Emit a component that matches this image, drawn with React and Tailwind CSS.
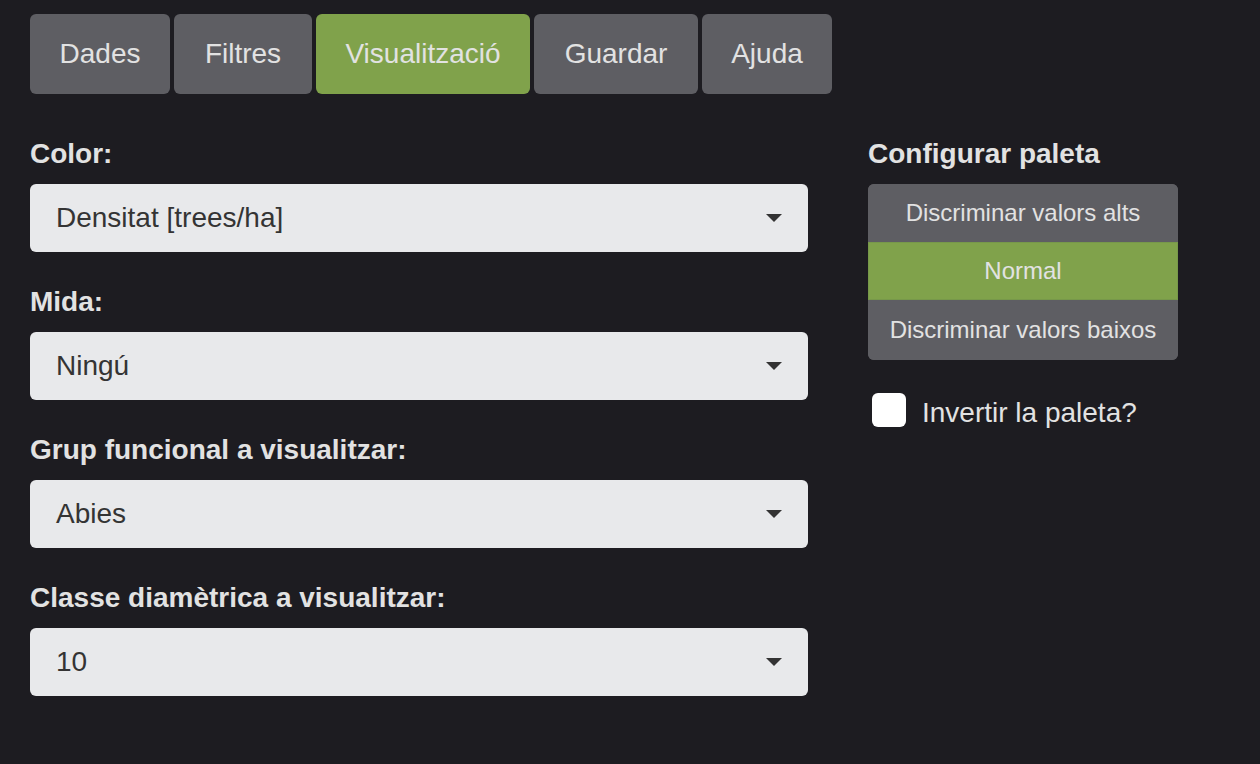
import { useState } from 'react';

const tabs = [
  ['Dades', 'w-[140px]'],
  ['Filtres', 'w-[138px]'],
  ['Visualització', 'w-[214px]'],
  ['Guardar', 'w-[164px]'],
  ['Ajuda', 'w-[130px]'],
];

const fields = [
  ['Color:', 'Densitat [trees/ha]'],
  ['Mida:', 'Ningú'],
  ['Grup funcional a visualitzar:', 'Abies'],
  ['Classe diamètrica a visualitzar:', '10'],
];

const palette = ['Discriminar valors alts', 'Normal', 'Discriminar valors baixos'];

function Select({ value }) {
  return (
    <div className="h-[68px] w-full rounded-[6px] bg-[#e8e9eb] pl-[26px] pr-[26px] flex items-center justify-between text-[28px] text-[#343434]">
      <span>{value}</span>
      <svg width="16" height="9" viewBox="0 0 16 9">
        <path d="M0 0h16L8 8z" fill="#333" />
      </svg>
    </div>
  );
}

export default function App() {
  const [tab, setTab] = useState('Visualització');
  const [mode, setMode] = useState('Normal');

  return (
    <div className="min-h-[764px] w-full bg-[#1d1c21] pl-[30px] pt-[14px] font-['Liberation_Sans',Arial,sans-serif]">
      {/* Tabs */}
      <div className="flex gap-[4px]">
        {tabs.map(([t, w]) => (
          <button
            key={t}
            onClick={() => setTab(t)}
            className={`h-[80px] ${w} rounded-[6px] text-[28px] text-[#e2e2e2] ${
              tab === t ? 'bg-[#80a24b]' : 'bg-[#5e5e63]'
            }`}
          >
            {t}
          </button>
        ))}
      </div>

      <div className="mt-[40px] flex gap-[60px]">
        {/* Left column */}
        <div className="w-[778px] flex flex-col gap-[30px]">
          {fields.map(([label, value]) => (
            <div key={label}>
              <div className="h-[40px] leading-[40px] mb-[10px] text-[28px] font-bold text-[#e2e2e2]">{label}</div>
              <Select value={value} />
            </div>
          ))}
        </div>

        {/* Right column */}
        <div className="w-[310px]">
          <div className="h-[40px] leading-[40px] mb-[10px] text-[28px] font-bold text-[#e2e2e2]">Configurar paleta</div>
          <div className="flex flex-col rounded-[6px] overflow-hidden bg-[#5e5e63]">
            {palette.map((p, i) => (
              <button
                key={p}
                onClick={() => setMode(p)}
                className={`text-[24px] text-[#e2e2e2] ${i === 2 ? 'h-[60px]' : 'h-[58px]'} ${
                  mode === p ? 'bg-[#80a24b] border border-[#77984a]' : 'bg-[#5e5e63]'
                }`}
              >
                {p}
              </button>
            ))}
          </div>
          <label className="mt-[26px] ml-[4px] flex items-center gap-[16px]">
            <span className="w-[34px] h-[34px] rounded-[6px] bg-white inline-block" />
            <span className="pt-[6px] text-[28px] text-[#e2e2e2]">Invertir la paleta?</span>
          </label>
        </div>
      </div>
    </div>
  );
}
